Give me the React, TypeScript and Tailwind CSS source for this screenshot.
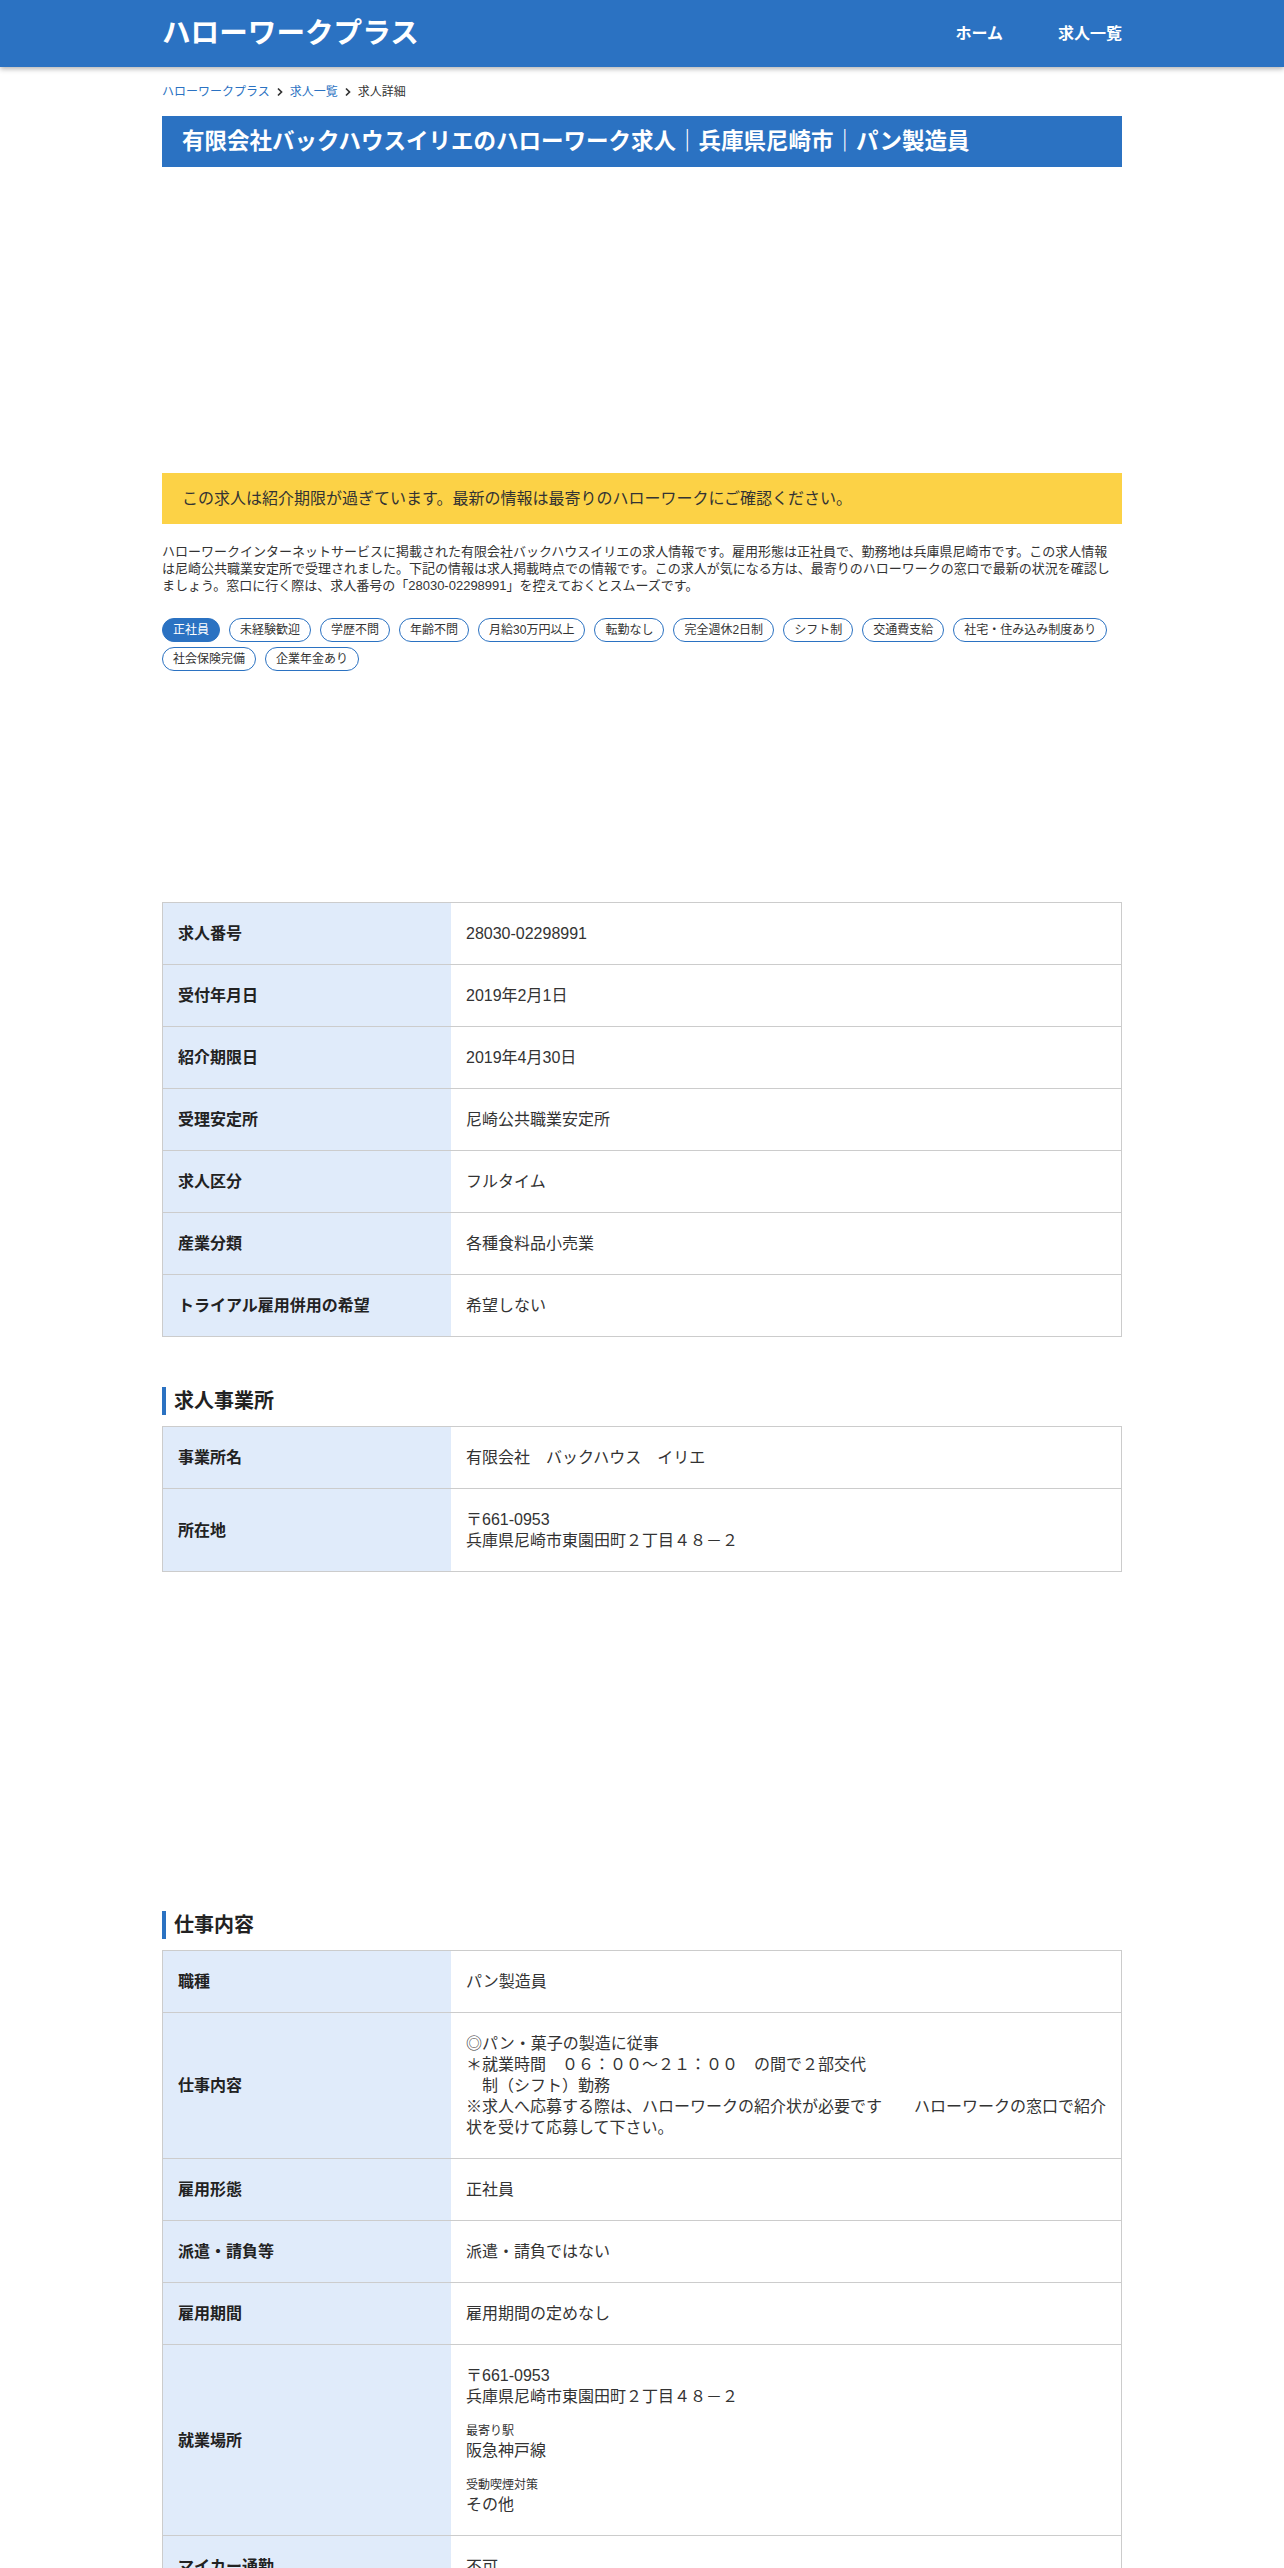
import React from "react";

const BLUE = "bg-[#2b72c2]";

type Row = { label: string; value: React.ReactNode };

function InfoTable({ rows }: { rows: Row[] }) {
  return (
    <div className="border-t border-x border-[#cccccc]">
      {rows.map((r, i) => (
        <div key={i} className="flex border-b border-[#cccccc]">
          <div className="w-[288px] shrink-0 bg-[#e0ebfa] px-[15px] py-[20px] flex items-center text-[16px] leading-[21px] font-bold text-[#222]">
            {r.label}
          </div>
          <div className="flex-1 pl-[15px] pr-[14px] py-[20px] text-[16px] leading-[21px] text-[#333] bg-white">
            {r.value}
          </div>
        </div>
      ))}
    </div>
  );
}

function Heading({ children }: { children: React.ReactNode }) {
  return (
    <h2 className="border-l-4 border-[#2b72c2] pl-[8px] text-[20px] leading-[28px] font-bold text-[#222]">
      {children}
    </h2>
  );
}

function Chevron() {
  return (
    <svg width="8" height="10" viewBox="0 0 8 10" className="mx-[6px]">
      <path d="M2 1.5 L5.5 5 L2 8.5" fill="none" stroke="#333" strokeWidth="1.7" />
    </svg>
  );
}

const tags = [
  "正社員",
  "未経験歓迎",
  "学歴不問",
  "年齢不問",
  "月給30万円以上",
  "転勤なし",
  "完全週休2日制",
  "シフト制",
  "交通費支給",
  "社宅・住み込み制度あり",
  "社会保険完備",
  "企業年金あり",
];

export default function App() {
  const font = { fontFamily: '"Liberation Sans", "Noto Sans CJK JP", sans-serif' };
  return (
    <div className="min-h-screen bg-white text-[#333]" style={font}>
      <header className={`${BLUE} h-[67px] shadow-[0_2px_5px_rgba(0,0,0,0.3)] relative z-10`}>
        <div className="w-[960px] mx-auto h-full flex items-center justify-between">
          <div className="text-white text-[28.6px] font-bold leading-none">ハローワークプラス</div>
          <nav className="flex items-center gap-[55px] text-white text-[16px] font-bold">
            <span>ホーム</span>
            <span>求人一覧</span>
          </nav>
        </div>
      </header>

      <main className="w-[960px] mx-auto">
        <div className="pt-[16px] flex items-center text-[12px] leading-[18px]">
          <span className="text-[#2b72c2]">ハローワークプラス</span>
          <Chevron />
          <span className="text-[#2b72c2]">求人一覧</span>
          <Chevron />
          <span className="text-[#333]">求人詳細</span>
        </div>

        <h1 className={`${BLUE} mt-[15px] px-[20px] py-[12px] text-white text-[22.5px] leading-[27px] font-bold`}>
          有限会社バックハウスイリエのハローワーク求人｜兵庫県尼崎市｜パン製造員
        </h1>

        <div className="h-[306px]" />

        <div className="bg-[#fcd246] px-[20px] py-[14px] text-[16px] leading-[23px] text-[#333]">
          この求人は紹介期限が過ぎています。最新の情報は最寄りのハローワークにご確認ください。
        </div>

        <p className="mt-[20px] w-[952px] text-[13px] leading-[16.8px] text-[#333]">
          ハローワークインターネットサービスに掲載された有限会社バックハウスイリエの求人情報です。雇用形態は正社員で、勤務地は兵庫県尼崎市です。この求人情報は尼崎公共職業安定所で受理されました。下記の情報は求人掲載時点での情報です。この求人が気になる方は、最寄りのハローワークの窓口で最新の状況を確認しましょう。窓口に行く際は、求人番号の「28030-02298991」を控えておくとスムーズです。
        </p>

        <div className="mt-[24px] flex flex-wrap gap-x-[9px] gap-y-[5px]">
          {tags.map((t, i) => (
            <span
              key={t}
              className={
                i === 0
                  ? "rounded-full border border-[#2b72c2] bg-[#2b72c2] text-white px-[10px] text-[12px] leading-[22px]"
                  : "rounded-full border border-[#2b72c2] bg-white text-[#333] px-[10px] text-[12px] leading-[22px]"
              }
            >
              {t}
            </span>
          ))}
        </div>

        <div className="h-[231px]" />

        <InfoTable
          rows={[
            { label: "求人番号", value: "28030-02298991" },
            { label: "受付年月日", value: "2019年2月1日" },
            { label: "紹介期限日", value: "2019年4月30日" },
            { label: "受理安定所", value: "尼崎公共職業安定所" },
            { label: "求人区分", value: "フルタイム" },
            { label: "産業分類", value: "各種食料品小売業" },
            { label: "トライアル雇用併用の希望", value: "希望しない" },
          ]}
        />

        <div className="mt-[50px]">
          <Heading>求人事業所</Heading>
        </div>
        <div className="mt-[11px]">
          <InfoTable
            rows={[
              { label: "事業所名", value: "有限会社　バックハウス　イリエ" },
              {
                label: "所在地",
                value: (
                  <>
                    <div>〒661-0953</div>
                    <div>兵庫県尼崎市東園田町２丁目４８－２</div>
                  </>
                ),
              },
            ]}
          />
        </div>

        <div className="h-[339px]" />

        <Heading>仕事内容</Heading>
        <div className="mt-[11px]">
          <InfoTable
            rows={[
              { label: "職種", value: "パン製造員" },
              {
                label: "仕事内容",
                value: (
                  <div className="whitespace-pre-wrap">
                    {"◎パン・菓子の製造に従事\n＊就業時間　０６：００～２１：００　の間で２部交代\n　制（シフト）勤務\n※求人へ応募する際は、ハローワークの紹介状が必要です　　ハローワークの窓口で紹介状を受けて応募して下さい。"}
                  </div>
                ),
              },
              { label: "雇用形態", value: "正社員" },
              { label: "派遣・請負等", value: "派遣・請負ではない" },
              { label: "雇用期間", value: "雇用期間の定めなし" },
              {
                label: "就業場所",
                value: (
                  <>
                    <div>〒661-0953</div>
                    <div>兵庫県尼崎市東園田町２丁目４８－２</div>
                    <div className="mt-[15px]">
                      <div className="text-[12px] leading-[18px]">最寄り駅</div>
                      <div>阪急神戸線</div>
                    </div>
                    <div className="mt-[15px]">
                      <div className="text-[12px] leading-[18px]">受動喫煙対策</div>
                      <div>その他</div>
                    </div>
                  </>
                ),
              },
              { label: "マイカー通勤", value: "不可" },
            ]}
          />
        </div>
        <div className="h-[80px]" />
      </main>
    </div>
  );
}
